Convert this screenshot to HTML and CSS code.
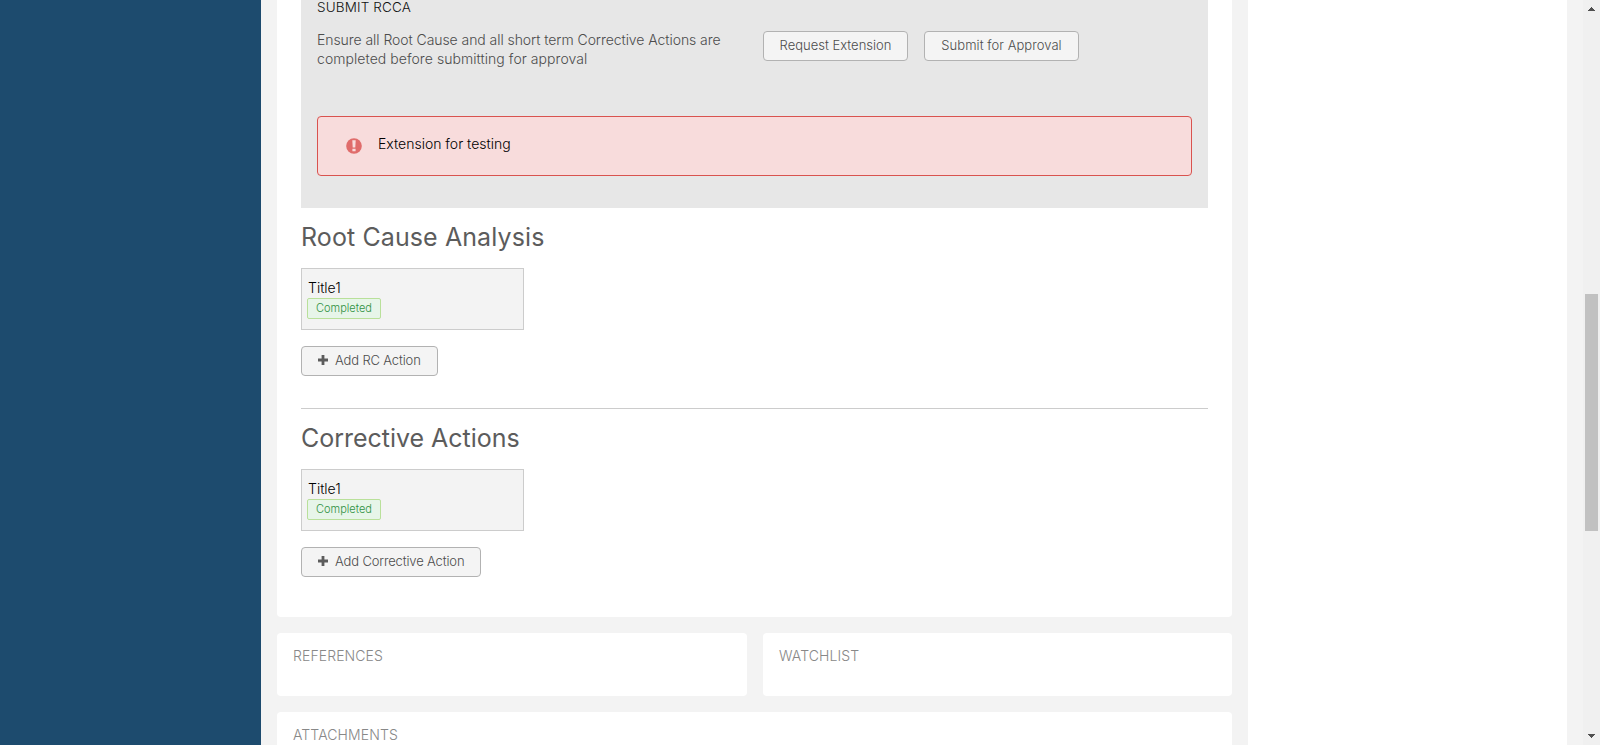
FILE: index.html
```html
<!DOCTYPE html>
<html lang="en">
<head>
<meta charset="utf-8">
<title>RCCA</title>
<link rel="stylesheet" href="styles.css">
</head>
<body>
<div class="app">
  <nav class="sidebar"></nav>
  <main class="content">
    <section class="card card-main">
      <div class="submit-panel">
        <h3 class="panel-title">SUBMIT RCCA</h3>
        <div class="submit-row">
          <p class="hint"><span class="hint-first">Ensure all Root Cause and all short term Corrective Actions are</span><br><span class="hint-second">completed before submitting for approval</span></p>
          <div class="actions">
            <button class="btn btn-request">Request Extension</button>
            <button class="btn btn-submit">Submit for Approval</button>
          </div>
        </div>
        <div class="alert">
          <svg class="alert-icon" width="16" height="16" viewBox="0 0 16 16"><circle cx="8" cy="8" r="7.8" fill="#e06c6b"/><path d="M6.3 2.3h3.4l-.4 7.2H6.7zM6.4 10.7h3.2v2.6H6.4z" fill="#f8dcdc"/></svg>
          <span class="alert-text">Extension for testing</span>
        </div>
      </div>
      <section class="group">
        <h2 class="group-title title-root">Root Cause Analysis</h2>
        <div class="item"><span class="item-title">Title1</span><span class="badge">Completed</span></div>
        <button class="btn btn-add btn-rc"><svg class="plus" width="10" height="10" viewBox="0 0 10 10"><path d="M3.6 0h2.8v3.6H10v2.8H6.4V10H3.6V6.4H0V3.6h3.6z" fill="#5c5c5c"/></svg><span>Add RC Action</span></button>
      </section>
      <section class="group group-divided">
        <h2 class="group-title title-corrective">Corrective Actions</h2>
        <div class="item"><span class="item-title">Title1</span><span class="badge">Completed</span></div>
        <button class="btn btn-add btn-ca"><svg class="plus" width="10" height="10" viewBox="0 0 10 10"><path d="M3.6 0h2.8v3.6H10v2.8H6.4V10H3.6V6.4H0V3.6h3.6z" fill="#5c5c5c"/></svg><span>Add Corrective Action</span></button>
      </section>
    </section>
    <div class="pair">
      <section class="card card-small"><h3 class="card-title references">REFERENCES</h3></section>
      <section class="card card-small"><h3 class="card-title watchlist">WATCHLIST</h3></section>
    </div>
    <section class="card card-small"><h3 class="card-title attachments">ATTACHMENTS</h3></section>
  </main>
  <aside class="aside"></aside>
  <div class="scrollbar">
    <svg class="arrow" width="7" height="4" viewBox="0 0 7 4" shape-rendering="crispEdges"><path d="M3 0h1v1h1v1h1v1h1v1H0V3h1V2h1V1h1z" fill="#505050"/></svg>
    <div class="thumb"></div>
    <svg class="arrow" width="7" height="4" viewBox="0 0 7 4" shape-rendering="crispEdges"><path d="M0 0h7v1H6v1H5v1H4v1H3V3H2V2H1V1H0z" fill="#505050"/></svg>
  </div>
</div>
</body>
</html>
```
FILE: styles.css
```css
* { box-sizing: border-box; }
body { margin: 0; background: #f3f3f3; font-family: Inter, Roboto, sans-serif; font-weight: 300; font-size: 14px; color: #4c4c4c; }
h2, h3, p { margin: 0; font-weight: 300; }
.app { display: grid; grid-template-columns: 261px 987px 319px 16px 17px; height: 745px; overflow: hidden; }
.sidebar { background: #1d4b6e; }
.content { padding: 0 16px; display: flex; flex-direction: column; gap: 16px; min-width: 0; height: 745px; overflow: hidden; }
.card { background: #fff; border-radius: 4px; flex-shrink: 0; }
.card-main { height: 617px; padding: 0 24px; border-radius: 0 0 4px 4px; }
.submit-panel { height: 208px; background: #e7e7e7; padding: 0 16px; }
.panel-title { height: 30px; line-height: 15px; color: #111; font-size: 13.5px; letter-spacing: 0.15px; }
.submit-row { display: grid; grid-template-columns: 446px 1fr; height: 86px; }
.hint { line-height: 19px; }
.hint-first { letter-spacing: -0.06px; }
.hint-second { letter-spacing: 0.06px; }
.actions { display: flex; gap: 16px; align-items: flex-start; padding-top: 1px; }
.btn { display: flex; align-items: center; justify-content: center; gap: 7px; height: 30px; padding: 0 0 2px; background: #f4f4f4; border: 1px solid #b2b2b2; border-radius: 4px; color: #4c4c4c; font-family: inherit; font-weight: 300; font-size: 13px; white-space: nowrap; }
.btn-request { width: 145px; }
.btn-submit { width: 155px; letter-spacing: 0.05px; }
.btn-add { justify-content: flex-start; padding-left: 16px; letter-spacing: -0.15px; }
.btn-rc { width: 137px; }
.btn-ca { width: 180px; }
.alert { display: flex; height: 60px; padding: 20px 28px; border: 1px solid #d9534f; border-radius: 4px; background: #f8dcdc; color: #000; }
.alert-icon { margin: 1px 16px 0 0; }
.alert-text { line-height: 14px; }
.group { padding-top: 14px; height: 200px; }
.group-divided { height: 201px; border-top: 1px solid #ccc; }
.group-title { height: 46px; line-height: 31px; font-size: 25px; font-weight: 400; color: #5c5c5c; white-space: nowrap; }
.title-root { letter-spacing: 0.1px; }
.title-corrective { letter-spacing: -0.02px; }
.item { display: flex; flex-direction: column; align-items: flex-start; width: 223px; height: 62px; margin-bottom: 16px; padding: 10px 5px; border: 1px solid #ccc; background: #f3f3f3; }
.item-title { height: 19px; padding-left: 1px; line-height: 17px; color: #000; }
.badge { width: 74px; height: 21px; border: 1px solid #b9e09a; border-radius: 2px; background: #e7f5e9; color: #2f9143; font-size: 11px; line-height: 19px; text-align: center; }
.pair { display: grid; grid-template-columns: 470px 469px; gap: 16px; flex-shrink: 0; }
.card-small { height: 63px; padding: 15px 16px; }
.card-title { font-size: 14px; line-height: 15px; color: #888; letter-spacing: 0.1px; }
.aside { background: #fff; }
.scrollbar { grid-column: 5; background: #f0f0f0; display: flex; flex-direction: column; align-items: center; padding: 7px 0; }
.thumb { width: 13px; height: 237px; margin: 283px 0 203px; background: #c1c1c1; }
```
